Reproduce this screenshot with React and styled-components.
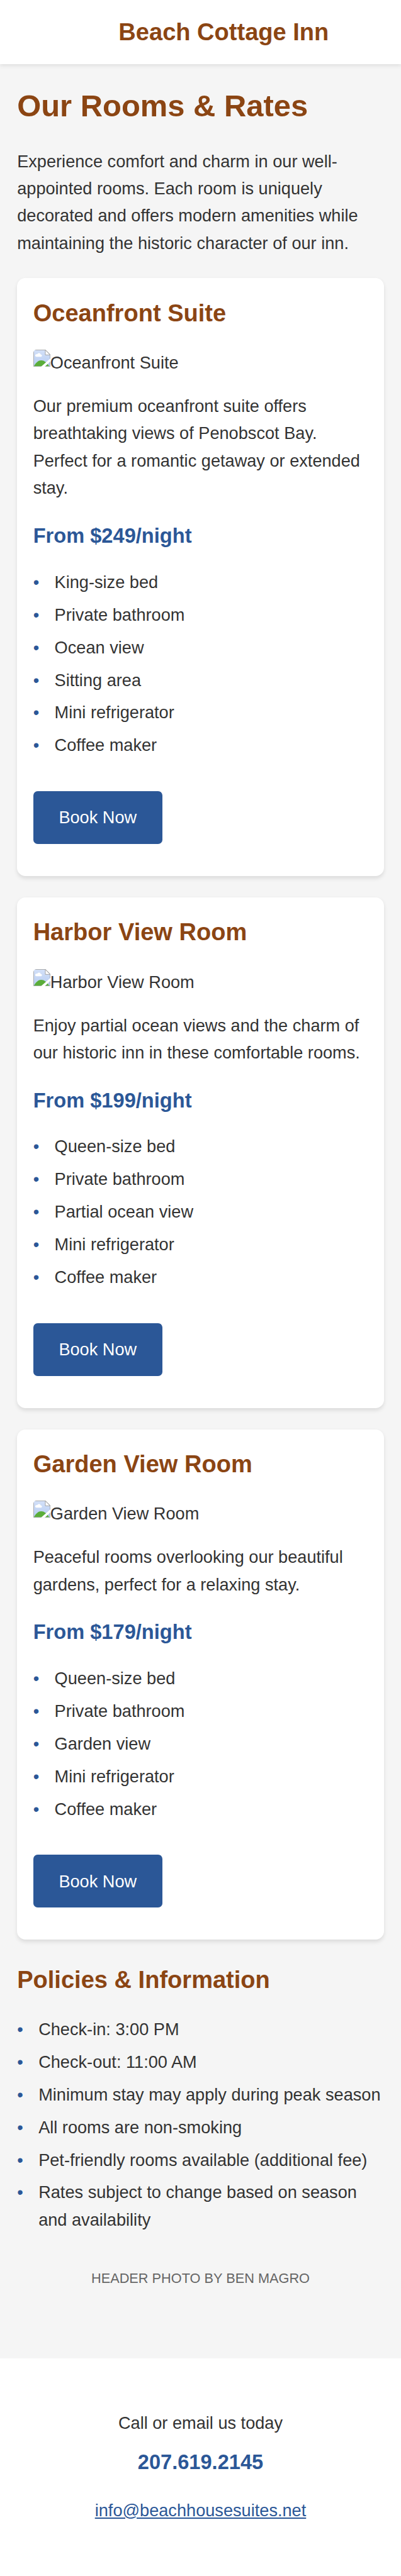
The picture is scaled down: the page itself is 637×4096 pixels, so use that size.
import React from "react";
import styled, { createGlobalStyle } from "styled-components";

// Design units: the layout is drawn on a 375-unit wide mobile canvas.
const u = (n) => `${(n * 637) / 375}px`;

const color = {
  brown: "#8b4513",
  blue: "#2b5797",
  text: "#333",
  muted: "#666",
  page: "#f5f5f5",
  card: "#fff",
};

const GlobalStyle = createGlobalStyle`
  *, *::before, *::after { box-sizing: border-box; }
  html, body { margin: 0; padding: 0; background: ${color.card}; }
  h1, h2, h3, p, ul { margin: 0; padding: 0; }
`;

const Page = styled.div`
  width: ${u(375)};
  min-height: 4096px;
  background: ${color.card};
  color: ${color.text};
  font-family: Arial, "Liberation Sans", sans-serif;
  font-size: ${u(16)};
  line-height: 1.6;
`;

const Header = styled.header`
  position: relative;
  display: flex;
  align-items: center;
  justify-content: center;
  height: ${u(60)};
  padding-left: ${u(43.4)};
  background: ${color.card};
  box-shadow: 0 ${u(2)} ${u(4)} rgba(0, 0, 0, 0.1);
`;

const Brand = styled.div`
  color: ${color.brown};
  font-size: ${u(22.4)};
  font-weight: 700;
  white-space: nowrap;
`;

const Main = styled.main`
  height: ${u(2147.7)};
  padding: ${u(16)};
  background: ${color.page};
`;

const PageTitle = styled.h1`
  margin-bottom: ${u(16)};
  color: ${color.brown};
  font-size: ${u(28.8)};
  font-weight: 700;
`;

const SectionTitle = styled.h2`
  margin-bottom: ${u(15)};
  color: ${color.brown};
  font-size: ${u(22.4)};
  font-weight: 700;
`;

const Paragraph = styled.p`
  margin-bottom: ${({ $gap }) => u($gap)};
`;

const Card = styled.section`
  margin-bottom: ${u(20)};
  padding: ${u(15)};
  border-radius: ${u(8)};
  background: ${color.card};
  box-shadow: 0 ${u(2)} ${u(4)} rgba(0, 0, 0, 0.1);
`;

const Photo = styled.div`
  display: flex;
  align-items: flex-start;
  margin-bottom: ${u(15)};
  padding-top: ${u(0.5)};
`;

const PhotoIcon = styled.svg`
  flex: none;
  width: ${u(16)};
  height: ${u(16)};
  margin-top: ${u(0.6)};
  border-top-left-radius: ${u(3)};
`;

const Price = styled.p`
  margin-bottom: ${u(15)};
  color: ${color.blue};
  font-size: ${u(19.2)};
  font-weight: 700;
`;

const List = styled.ul`
  display: flex;
  flex-direction: column;
  list-style: none;
`;

const Item = styled.li`
  display: flex;
  margin-bottom: ${u(5)};

  &::before {
    content: "•";
    flex: 0 0 ${u(20)};
    color: ${color.blue};
  }
`;

const BookButton = styled.a`
  display: block;
  width: fit-content;
  margin: ${u(25)} 0 ${u(15)};
  padding: ${u(12)} ${u(24)};
  border-radius: ${u(4)};
  background: ${color.blue};
  color: #fff;
  text-decoration: none;
`;

const Credit = styled.p`
  margin-top: ${u(27)};
  color: ${color.muted};
  font-size: ${u(12.8)};
  text-align: center;
  text-transform: uppercase;
`;

const Footer = styled.footer`
  display: flex;
  flex-direction: column;
  align-items: center;
  padding-top: ${u(47.7)};
`;

const Phone = styled.div`
  margin: ${u(8.4)} 0 ${u(17)};
  color: ${color.blue};
  font-size: ${u(19.2)};
  font-weight: 700;
`;

const Email = styled.a`
  color: ${color.blue};
  text-decoration: underline;
`;

const rooms = [
  {
    name: "Oceanfront Suite",
    text: "Our premium oceanfront suite offers breathtaking views of Penobscot Bay. Perfect for a romantic getaway or extended stay.",
    price: "From $249/night",
    features: ["King-size bed", "Private bathroom", "Ocean view", "Sitting area", "Mini refrigerator", "Coffee maker"],
  },
  {
    name: "Harbor View Room",
    text: "Enjoy partial ocean views and the charm of our historic inn in these comfortable rooms.",
    price: "From $199/night",
    features: ["Queen-size bed", "Private bathroom", "Partial ocean view", "Mini refrigerator", "Coffee maker"],
  },
  {
    name: "Garden View Room",
    text: "Peaceful rooms overlooking our beautiful gardens, perfect for a relaxing stay.",
    price: "From $179/night",
    features: ["Queen-size bed", "Private bathroom", "Garden view", "Mini refrigerator", "Coffee maker"],
  },
];

const policies = [
  "Check-in: 3:00 PM",
  "Check-out: 11:00 AM",
  "Minimum stay may apply during peak season",
  "All rooms are non-smoking",
  "Pet-friendly rooms available (additional fee)",
  "Rates subject to change based on season and availability",
];

function MissingPhotoIcon() {
  return (
    <PhotoIcon viewBox="0 0 16 16" aria-hidden="true">
      <defs>
        <linearGradient id="sky" x1="0" y1="0" x2="0" y2="1">
          <stop offset="0" stopColor="#d3e0f8" />
          <stop offset="1" stopColor="#b7cdf2" />
        </linearGradient>
      </defs>
      <path d="M.25.25H11.3L15.75 4.6V15.75H.25Z" fill="url(#sky)" stroke="#999" strokeWidth=".5" />
      <path d="M11.2.3V4.9H15.7Z" fill="#fff" stroke="#999" strokeWidth=".5" />
      <path d="M2.9 6.6a1.2 1.2 0 0 1 0-2.4a1.2 1.2 0 0 1 .7.1a1.75 1.75 0 0 1 3.3.2a1.1 1.1 0 0 1 .5 2.1Z" fill="#fff" />
      <path d="M.5 15.5C2.4 11.9 4.8 10 7.3 10c2.8 0 5.4 2 7.5 5.5Z" fill="#5aad3a" />
      <path d="M16 8.1V11L10.6 16H7.1Z" fill="#fff" />
    </PhotoIcon>
  );
}

function FeatureList({ items }) {
  return (
    <List>
      {items.map((item) => (
        <Item key={item}>{item}</Item>
      ))}
    </List>
  );
}

function RoomCard({ room }) {
  return (
    <Card>
      <SectionTitle>{room.name}</SectionTitle>
      <Photo>
        <MissingPhotoIcon />
        {room.name}
      </Photo>
      <Paragraph $gap={16.6}>{room.text}</Paragraph>
      <Price>{room.price}</Price>
      <FeatureList items={room.features} />
      <BookButton>Book Now</BookButton>
    </Card>
  );
}

export default function App() {
  return (
    <Page>
      <GlobalStyle />
      <Header>
        <Brand>Beach Cottage Inn</Brand>
      </Header>
      <Main>
        <PageTitle>Our Rooms &amp; Rates</PageTitle>
        <Paragraph $gap={20}>
          Experience comfort and charm in our well-appointed rooms. Each room is uniquely decorated and offers modern
          amenities while maintaining the historic character of our inn.
        </Paragraph>
        {rooms.map((room) => (
          <RoomCard key={room.name} room={room} />
        ))}
        <SectionTitle>Policies &amp; Information</SectionTitle>
        <FeatureList items={policies} />
        <Credit>Header photo by Ben Magro</Credit>
      </Main>
      <Footer>
        <div>Call or email us today</div>
        <Phone>207.619.2145</Phone>
        <Email>info@beachhousesuites.net</Email>
      </Footer>
    </Page>
  );
}
